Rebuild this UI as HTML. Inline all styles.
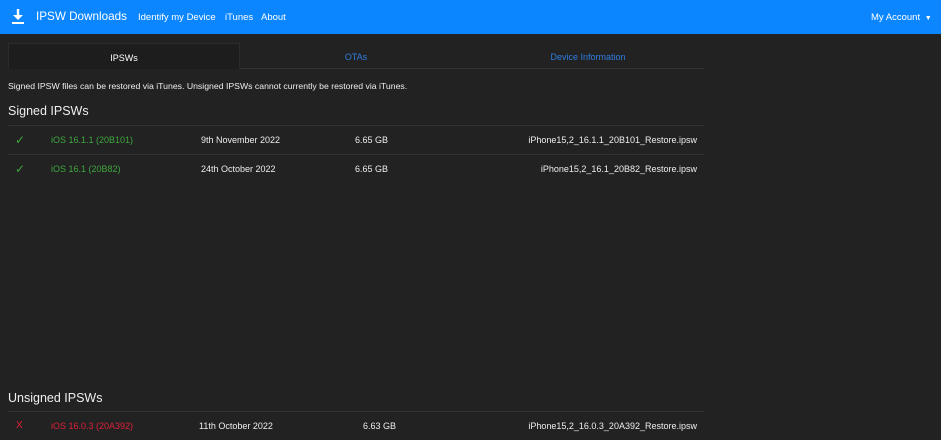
<!DOCTYPE html>
<html><head><meta charset="utf-8"><style>
*{margin:0;padding:0;box-sizing:border-box}
body{width:941px;height:440px;background:#222;font-family:"Liberation Sans",sans-serif;color:#eee;position:relative;overflow:hidden;font-size:9px}
.nav{position:absolute;left:0;top:0;width:941px;height:34px;background:#0b86ff;color:#fff}
.a{position:absolute;white-space:nowrap}
.tab{position:absolute;top:43px;height:26px;width:232px;text-align:center;line-height:28px;font-size:9px}
.line{position:absolute;left:8px;width:696px;height:1px;background:#333}
.g{color:#3fa83f}.r{color:#e0203a}
.ck{font-size:12px}
</style></head><body>
<div class="nav">
<svg class="a" style="left:11px;top:9px" width="14" height="16" viewBox="0 0 14 16"><path d="M7 0v8" stroke="#fff" stroke-width="2.4"/><path d="M2 6l5 5 5-5z" fill="#fff"/><rect x="1" y="13" width="12" height="2" fill="#fff"/></svg>
<div class="a" style="left:36px;top:10px;font-size:11.7px">IPSW Downloads</div>
<div class="a" style="left:138px;top:12px;font-size:9.5px">Identify my Device</div>
<div class="a" style="left:225px;top:12px;font-size:9.5px">iTunes</div>
<div class="a" style="left:261px;top:12px;font-size:9.5px">About</div>
<div class="a" style="left:871px;top:12px;font-size:9.5px">My Account <span style="font-size:7px;margin-left:2px">▼</span></div>
</div>
<div class="tab" style="left:8px;background:#1d1d1d;border:1px solid #2c2c2c;border-bottom:none;color:#fff">IPSWs</div>
<div class="tab" style="left:240px;color:#2f7de0">OTAs</div>
<div class="tab" style="left:472px;color:#2f7de0">Device Information</div>
<div class="line" style="top:68px;left:240px;width:464px"></div>
<div class="a" style="left:8px;top:81px;font-size:8.7px">Signed IPSW files can be restored via iTunes. Unsigned IPSWs cannot currently be restored via iTunes.</div>
<div class="a" style="left:8px;top:104px;font-size:12.5px">Signed IPSWs</div>
<div class="line" style="top:125px"></div>
<div class="a g ck" style="left:15px;top:133px">✓</div><div class="a g" style="left:51px;top:135px">iOS 16.1.1 (20B101)</div>
<div class="a" style="left:201px;top:135px">9th November 2022</div><div class="a" style="left:355px;top:135px">6.65 GB</div>
<div class="a" style="right:244px;top:135px">iPhone15,2_16.1.1_20B101_Restore.ipsw</div>
<div class="line" style="top:154px"></div>
<div class="a g ck" style="left:15px;top:162px">✓</div><div class="a g" style="left:51px;top:164px">iOS 16.1 (20B82)</div>
<div class="a" style="left:201px;top:164px">24th October 2022</div><div class="a" style="left:355px;top:164px">6.65 GB</div>
<div class="a" style="right:244px;top:164px">iPhone15,2_16.1_20B82_Restore.ipsw</div>
<div class="a" style="left:8px;top:391px;font-size:12.5px">Unsigned IPSWs</div>
<div class="line" style="top:411px"></div>
<div class="a r" style="left:16px;top:420px;font-size:10px">X</div><div class="a r" style="left:51px;top:421px">iOS 16.0.3 (20A392)</div>
<div class="a" style="left:199px;top:421px">11th October 2022</div><div class="a" style="left:363px;top:421px">6.63 GB</div>
<div class="a" style="right:244px;top:421px">iPhone15,2_16.0.3_20A392_Restore.ipsw</div>
</body></html>
